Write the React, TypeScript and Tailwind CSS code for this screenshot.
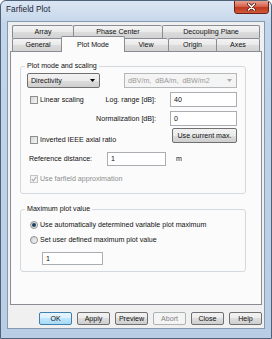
import React from 'react';

const btnBase =
  'w-[33px] h-[13px] flex items-center justify-center rounded-[2px] border';
const btnNormal =
  'border-[#707070] bg-[linear-gradient(#f2f2f2,#ebebeb_50%,#dddddd_50%,#cfcfcf)]';

const Tab = ({ label, cls, selected }: { label: string; cls: string; selected?: boolean }) => (
  <div
    className={`${cls} flex items-center justify-center border-t border-l border-[#898c95] rounded-t-[2px] ${
      selected
        ? 'relative z-10 -mt-[2px] -mb-[1px] -mx-[2px] border-r bg-[#fbfbfb]'
        : 'bg-[linear-gradient(#f4f4f4,#e9e9e9_50%,#dcdcdc_50%,#d2d2d2)]'
    }`}
  >
    {label}
  </div>
);

const CheckBox = ({ label, checked, disabled }: { label: string; checked?: boolean; disabled?: boolean }) => (
  <div className="flex items-center h-[10px]">
    <span
      className={`w-[8px] h-[8px] border flex items-center justify-center ${
        disabled
          ? 'border-[#c4c4c4] bg-[#f4f4f4]'
          : 'border-[#8e8f8f] bg-[linear-gradient(135deg,#d4d4d4,#f8f8f8)]'
      }`}
    >
      {checked && (
        <svg width="6" height="6" viewBox="0 0 6 6">
          <path d="M0.8 3.1 L2.3 4.8 L5.3 0.9" fill="none" stroke={disabled ? '#a9a9a9' : '#333333'} strokeWidth="1.1" />
        </svg>
      )}
    </span>
    <span className={`ml-[2px] ${disabled ? 'text-[#8d8d8d]' : ''}`}>{label}</span>
  </div>
);

const Radio = ({ label, checked }: { label: string; checked?: boolean }) => (
  <div className="flex items-center h-[10px]">
    <span className="w-[8px] h-[8px] rounded-full border border-[#8e8f8f] bg-[linear-gradient(135deg,#cfcfcf,#f8f8f8)] flex items-center justify-center">
      {checked && <span className="w-[4px] h-[4px] rounded-full bg-[#21405f]" />}
    </span>
    <span className="ml-[2px]">{label}</span>
  </div>
);

const Arrow = ({ color }: { color: string }) => (
  <svg width="5" height="3" viewBox="0 0 5 3">
    <path d="M0 0 H5 L2.5 3 Z" fill={color} />
  </svg>
);

const TextBox = ({ value, cls }: { value: string; cls: string }) => (
  <div className={`${cls} border border-[#abadb3] bg-white px-[3px] flex items-center`}>{value}</div>
);

export default function App() {
  return (
    <div className="w-[272px] h-[339px] flex flex-col rounded-t-[6px] border border-[#4f6179] bg-[linear-gradient(#dbe6f3,#c3d5ea_24px,#b9cde5)] font-['Liberation_Sans',Arial,sans-serif] text-[7.1px] leading-[10px] text-[#111111] overflow-hidden">
      {/* title bar */}
      <div className="h-[20px] flex items-start justify-between">
        <span className="ml-[5px] mt-[3px] text-[8.3px] leading-[11px] text-[#1b2636]">Farfield Plot</span>
        <div className="mr-[2px] w-[35px] h-[14px] -mt-[1px] rounded-b-[3px] border border-[#6e2116] bg-[linear-gradient(#e8a090,#d4654f_45%,#c0381f_55%,#cf5a3a)] flex items-center justify-center">
          <svg width="9" height="8" viewBox="0 0 9 8">
            <path d="M1.5 1 L7.5 7 M7.5 1 L1.5 7" stroke="#4a1710" strokeWidth="3" strokeLinecap="round" />
            <path d="M1.5 1 L7.5 7 M7.5 1 L1.5 7" stroke="#ffffff" strokeWidth="1.6" strokeLinecap="round" />
          </svg>
        </div>
      </div>

      {/* client area */}
      <div className="mx-[6px] h-[308px] border border-[#8699b1] bg-[#f0f0f0] flex flex-col pt-[3px] pb-[3px]">
        {/* tabs row 1 */}
        <div className="ml-[4px] w-[248px] h-[13px] flex">
          <Tab label="Array" cls="w-[61px]" />
          <Tab label="Phase Center" cls="w-[89px]" />
          <Tab label="Decoupling Plane" cls="w-[98px] border-r" />
        </div>
        {/* tabs row 2 */}
        <div className="ml-[4px] w-[248px] h-[13px] flex">
          <Tab label="General" cls="w-[51px]" />
          <Tab label="Plot Mode" cls="w-[64px]" selected />
          <Tab label="View" cls="w-[45px]" />
          <Tab label="Origin" cls="w-[48px]" />
          <Tab label="Axes" cls="w-[44px] border-r" />
        </div>

        {/* tab page */}
        <div className="mx-[2px] flex-1 border border-[#898c95] bg-[#fbfbfb] pt-[9px] pl-[9px] pr-[15px]">
          <fieldset className="border border-[#d3d9de] rounded-[3px] pb-[9px]">
            <legend className="ml-[4px] px-[2px] leading-[10px]">Plot mode and scaling</legend>

            <div className="mt-[2px] h-[15px] flex">
              <div className="ml-[6px] w-[73px] h-[15px] rounded-[2px] border border-[#707070] bg-[linear-gradient(#f2f2f2,#ebebeb_50%,#dddddd_50%,#cfcfcf)] flex items-center justify-between pl-[3px] pr-[4px]">
                <span>Directivity</span>
                <Arrow color="#000000" />
              </div>
              <div className="ml-[24px] w-[113px] h-[15px] border border-[#b4b8bb] bg-[#f4f4f4] flex items-center justify-between pl-[3px] pr-[4px] text-[#9a9a9a]">
                <span>dBV/m,&nbsp; dBA/m,&nbsp; dBW/m2</span>
                <Arrow color="#a8a8a8" />
              </div>
            </div>

            <div className="mt-[4px] h-[15px] flex items-center">
              <div className="w-[65px] pl-[9px]">
                <CheckBox label="Linear scaling" />
              </div>
              <span className="w-[71px] text-right pr-[1px] whitespace-nowrap">Log. range [dB]:</span>
              <TextBox value="40" cls="ml-[13px] w-[67px] h-[15px]" />
            </div>

            <div className="mt-[4px] h-[15px] flex items-center">
              <div className="w-[65px]" />
              <span className="w-[71px] text-right pr-[1px] whitespace-nowrap">Normalization [dB]:</span>
              <TextBox value="0" cls="ml-[13px] w-[67px] h-[15px]" />
            </div>

            <div className="mt-[2px] flex items-start">
              <div className="w-[151px] pl-[9px] mt-[7px]">
                <CheckBox label="Inverted IEEE axial ratio" />
              </div>
              <div className={`${btnBase} ${btnNormal} w-[65px] h-[15px]`}>Use current max.</div>
            </div>

            <div className="mt-[7px] h-[14px] flex items-center">
              <span className="ml-[8px] w-[78px]">Reference distance:</span>
              <TextBox value="1" cls="w-[59px] h-[14px]" />
              <span className="ml-[10px]">m</span>
            </div>

            <div className="mt-[8px] pl-[9px]">
              <CheckBox label="Use farfield approximation" checked disabled />
            </div>
          </fieldset>

          <fieldset className="mt-[10px] border border-[#d3d9de] rounded-[3px] pb-[6px]">
            <legend className="ml-[4px] px-[2px] leading-[10px]">Maximum plot value</legend>
            <div className="mt-[6px] pl-[9px]">
              <Radio label="Use automatically determined variable plot maximum" checked />
            </div>
            <div className="mt-[5px] pl-[9px]">
              <Radio label="Set user defined maximum plot value" />
            </div>
            <TextBox value="1" cls="mt-[7px] ml-[21px] w-[61px] h-[13px]" />
          </fieldset>
        </div>

        {/* dialog buttons */}
        <div className="mt-[7px] h-[13px] flex justify-end gap-[5px] pr-[2px]">
          <div className={`${btnBase} border-[#3c7fb1] bg-[linear-gradient(#eaf6fd,#d9f0fc_50%,#bee6fd_50%,#a7d9f5)]`}>OK</div>
          <div className={`${btnBase} ${btnNormal}`}>Apply</div>
          <div className={`${btnBase} ${btnNormal}`}>Preview</div>
          <div className={`${btnBase} border-[#adb2b5] bg-[#f4f4f4] text-[#838383]`}>Abort</div>
          <div className={`${btnBase} ${btnNormal}`}>Close</div>
          <div className={`${btnBase} ${btnNormal}`}>Help</div>
        </div>
      </div>
    </div>
  );
}
